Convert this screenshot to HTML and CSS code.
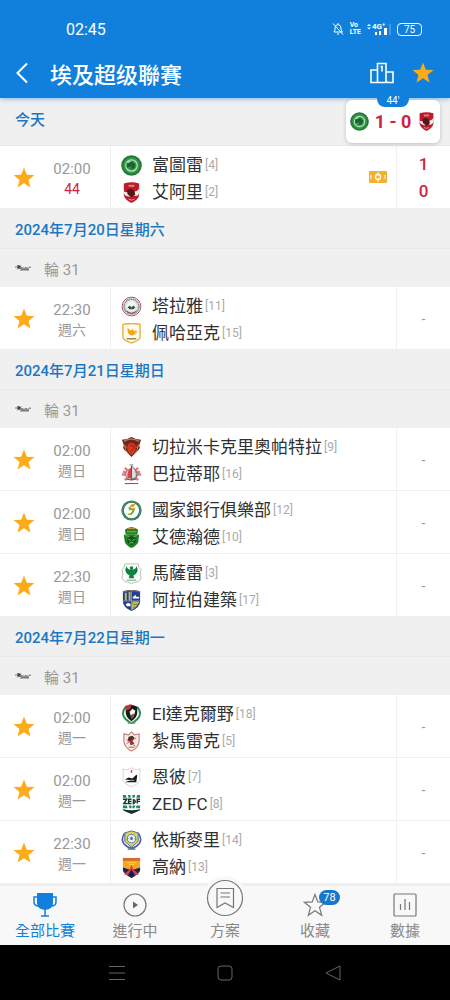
FILE: index.html
```html
<!DOCTYPE html>
<html lang="zh-Hant">
<head>
    <meta charset="UTF-8">
    <meta name="viewport" content="width=device-width, initial-scale=1.0">
    <title>埃及超级聯賽</title>
    <link rel="stylesheet" href="styles.css">
</head>
<body>

    <!-- Shared icons and club crests -->
    <svg class="sprite" aria-hidden="true">
        <symbol id="star" viewBox="0 0 22 22"><path d="M11 0.5l2.8 7.2 7.7.4-6 4.9 2 7.5-6.5-4.2-6.5 4.2 2-7.5-6-4.9 7.7-.4z" fill="#fbac18"/></symbol>
        <symbol id="league" viewBox="0 0 16 10">
            <circle cx="4" cy="4" r="1.700" fill="#222"/>
            <path d="M0 4h2M2 2l4 4M2 6.500l4-4M5 7h9" stroke="#555" stroke-width=".8" fill="none"/>
            <path d="M7 4v3M9 4.500v2.500M11 4v3M13 4.500v2.500M15 3.500v1.500" stroke="#555" stroke-width="1.200"/>
        </symbol>
        <symbol id="future" viewBox="0 0 22 22">
            <circle cx="11" cy="11" r="10.800" fill="#237b36"/>
            <circle cx="11" cy="11" r="8.600" fill="#37964a"/>
            <circle cx="11" cy="11" r="6" fill="none" stroke="#b8e0bd" stroke-width="1.300"/>
            <path d="M6 8l6-1 3 3-1 4-4 1 1-3-5 1z" fill="#15662a"/>
            <path d="M7 8l3-1.500" stroke="#e6f5e6"/>
        </symbol>
        <symbol id="ahly" viewBox="0 0 22 22">
            <path d="M3 1.500Q11-1 19 1.500V13q0 5-8 9-8-4-8-9z" fill="#bd1b2b"/>
            <path d="M8 3h6v2H8z" fill="#e5828a"/>
            <path d="M3 10q4 2 6-1l3-1 2 2q3 0 5-3v5q-2 4-6 2l-3 1q-5 1-7-3z" fill="#eee"/>
            <path d="M6 9q4-4 8 0l1 4-4 3-4-3z" fill="#53191a"/>
            <path d="M8 18q3 2 6 0" stroke="#e9a0a0" fill="none"/>
        </symbol>
        <symbol id="tala" viewBox="0 0 22 22">
            <circle cx="11" cy="11" r="9.800" fill="#fff" stroke="#a64b52" stroke-width="1"/>
            <circle cx="11" cy="11" r="7.800" fill="#dfe5e3" stroke="#7d928e" stroke-width="1.800" stroke-dasharray="1.500 .5"/>
            <circle cx="11" cy="10.500" r="5" fill="#f5f6f5"/>
            <path d="M7 12l2-2 2 2 2-2 2 2-2 2H9z" fill="#35504c"/>
            <path d="M6 16q5 4 10 0" stroke="#8b3139" fill="none"/>
        </symbol>
        <symbol id="pharco" viewBox="0 0 22 22">
            <path d="M2 1.500q9-2 18 0V15q0 3-9 6-9-3-9-6z" fill="#fff9e9" stroke="#e3ae3e" stroke-width="1.400"/>
            <path d="M7 5q4 5 5 1 2 4 4 2-1 5-5 5-5-1-4-8z" fill="#f5a51d"/>
            <path d="M15 8q3 0 0 4" stroke="#e6b95e" fill="none"/>
            <path d="M6 16.500h10" stroke="#9a855d" stroke-width="1.600"/>
        </symbol>
        <symbol id="cleopatra" viewBox="0 0 22 22">
            <path d="M1 3q5 0 10-3 5 3 10 3l-2 6q2 3-2 6l-6 6-6-6q-4-3-2-6z" fill="#6e2420"/>
            <path d="M3 4.500Q11 0 19 4.500" stroke="#c7793d" stroke-width="1.500" fill="none"/>
            <path d="M4 8q0 6 4 10M18 8q0 6-4 10M3 9l3 2M19 9l-3 2" stroke="#d27d35" fill="none"/>
            <path d="M7 8q4-4 8 0 2 6-4 11-6-5-4-11z" fill="#d9391d"/>
            <path d="M9 10l3-2 2 4-4 3" stroke="#882017" fill="none"/>
        </symbol>
        <symbol id="mahalla" viewBox="0 0 22 22">
            <path d="M4 4l14 13M18 4L4 17M1 11h20M2 8l4 1M20 8l-4 1" stroke="#dc7e83" stroke-width="2.500"/>
            <circle cx="11" cy="11" r="6" fill="#f3eaea" stroke="#bd5960"/>
            <path d="M11 2q6 4 5 12l-5 2z" fill="#ddd" stroke="#555" stroke-width=".8"/>
            <path d="M11 3Q5 9 7 15h4z" fill="#d44750"/>
            <path d="M11 2v14M6 16h10M4 20.500h14" stroke="#555"/>
            <path d="M9 1h4" stroke="#777"/>
        </symbol>
        <symbol id="nbe" viewBox="0 0 22 22">
            <circle cx="11" cy="11" r="9.300" fill="#fff" stroke="#2f7a58" stroke-width="2.600"/>
            <circle cx="11" cy="11" r="9.300" fill="none" stroke="#8fb7a2" stroke-width=".7" stroke-dasharray="1 1"/>
            <path d="M15 5q-6 0-6 5l5-1q-1 6-7 6" stroke="#d6a92c" stroke-width="1.700" fill="none"/>
            <path d="M8 8l5 3-3 5" stroke="#55a35c" stroke-width="1.300" fill="none"/>
            <circle cx="12" cy="6" r="1.500" fill="#c8952d"/>
        </symbol>
        <symbol id="ittihad" viewBox="0 0 22 22">
            <path d="M4 3l3-2 4-1 4 1 3 2-1 5H5z" fill="#2b7f25"/>
            <path d="M3 8h16l-1 8q-2 4-7 6-5-2-7-6z" fill="#188322"/>
            <path d="M5 9q6 3 12 0M6 5h10" stroke="#83b850" fill="none"/>
            <circle cx="11" cy="14" r="4.500" fill="#075d15"/>
            <path d="M8 13l2 1M14 13l-2 1M9 17q2-2 4 0" stroke="#a7d7a0" fill="none"/>
            <path d="M7 1.500h8" stroke="#ce9b3e"/>
        </symbol>
        <symbol id="masry" viewBox="0 0 22 22">
            <path d="M4 1h14q0 4 3 6-2 5 0 8-1 5-6 5l-4 1.500L7 20q-5 0-6-5 2-3 0-8 3-2 3-6z" fill="#fff" stroke="#91b69a" stroke-width=".8"/>
            <path d="M9 5q2-3 4 0l-1 2q4 0 4-4 4 7-3 10l1 3H8l1-3Q2 10 6 3q0 4 4 4z" fill="#108341"/>
            <path d="M6 6v4M16 6v4" stroke="#0b6e34"/>
            <path d="M6 18h10" stroke="#8bb194" stroke-width="1.300"/>
        </symbol>
        <symbol id="arab" viewBox="0 0 22 22">
            <path d="M2 2q9-3 18 0v10q0 6-9 10-9-4-9-10z" fill="#253e8f"/>
            <path d="M4 3h2v8H4zM8 2h2v9H8zM12 12h7q-1 5-8 9z" fill="#c8bd45"/>
            <path d="M13 15h5M12.500 18h3" stroke="#777c39"/>
            <path d="M12 8l3-3 1 2h3v2h-6zM5 15q3-3 5 0v2H6z" fill="#fff"/>
            <path d="M11 1v20M2 11.500h18" stroke="#a6afca" stroke-width=".7"/>
            <path d="M2 2q9-3 18 0" stroke="#776a65" stroke-width="1.500" fill="none"/>
        </symbol>
        <symbol id="dakhleya" viewBox="0 0 22 22">
            <path d="M5 3Q-1 10 5 16q3 3 6 4 3-1 6-4 6-6 0-13" stroke="#2d8b50" stroke-width="2" fill="none"/>
            <path d="M5 3q6-4 12 0v7q-1 5-6 8-5-3-6-8z" fill="#171b1a"/>
            <path d="M4 2l7-2-1 5-5 2z" fill="#c52f35"/>
            <path d="M9 8l3-3 3 2-1 4-4 1z" fill="#f7f3ef"/>
            <path d="M10 12l3-2 1 3-3 3z" fill="#765a50"/>
            <path d="M7 20h8" stroke="#6b9f79" stroke-width="1.500"/>
        </symbol>
        <symbol id="zamalek" viewBox="0 0 22 22">
            <path d="M3 3l5 1 3-3 3 3 5-1v8q-1 7-8 10-7-3-8-10z" fill="#f7ebe6" stroke="#c98275" stroke-width="1.200"/>
            <path d="M8 6l4-1 2 2-2 4 2 2-4 2-1-4-2-1z" fill="#542c2a"/>
            <path d="M6 13l10-6M6 9l9 7M8 17h6" stroke="#c95450" stroke-width="1"/>
        </symbol>
        <symbol id="enppi" viewBox="0 0 22 22">
            <path d="M2 2l4 1 5-2 5 2 4-1q-1 6 0 12-2 4-9 7-7-3-9-7 1-6 0-12z" fill="#fff" stroke="#c9c9c9" stroke-width=".8"/>
            <path d="M11 3v3" stroke="#d74a51" stroke-width="1.600"/>
            <path d="M4 13l4-2 4 1 4-4 1 1-1 7H4l6-2z" fill="#191919"/>
            <path d="M6 14h8" stroke="#eee" stroke-width=".7"/>
        </symbol>
        <symbol id="zed" viewBox="0 0 22 22">
            <path d="M2 1h3l1 3H2zM7 1h3v3H8zM12 1h3l-1 3h-2zM17 1h3v3h-4zM2 12h4l1 3H2zM8 12h3v3H9zM12 12h3l-1 3h-2zM16 12h4v3h-4z" fill="#16896a"/>
            <path d="M2 5.500h4L3 10h4M11 5.500H8V10h3M8 7.700h3M13 5.500V10q4-2.200 0-4.500M20 5.500h-3V10M17 7.700h3" stroke="#17372f" stroke-width="1.500" fill="none"/>
            <path d="M2 16q9 2 18 0v1q-2 1-9 4-7-3-9-4z" fill="#162e29"/>
        </symbol>
        <symbol id="ismaily" viewBox="0 0 22 22">
            <path d="M4 3Q-2 12 6 17q5 4 10 0 8-5 2-14" stroke="#4c62a4" stroke-width="1.800" fill="none"/>
            <path d="M4 3l7-2 7 2v9l-7 6-7-6z" fill="#ddd54f" stroke="#4f69a3"/>
            <circle cx="11" cy="9" r="4.500" fill="#edf2f7" stroke="#5775b0"/>
            <path d="M10 8l1-1 1 1v2h-2zM8 9l-2 1M14 9l2 1" fill="#4c6db1" stroke="#4c6db1" stroke-width=".7"/>
            <path d="M7 20h8" stroke="#666f8b" stroke-width="1.500"/>
        </symbol>
        <symbol id="gouna" viewBox="0 0 22 22">
            <path d="M2 1h18v13q-1 4-9 8-8-4-9-8z" fill="#f8a51d"/>
            <path d="M2 1h18v3H2z" fill="#db6932"/>
            <path d="M6 6h10M8 8h6" stroke="#ffd33b"/>
            <path d="M2 11l9 3 9-3v3q-1 4-9 8-8-4-9-8z" fill="#172760"/>
            <path d="M11 8l2 5 6 5-4 1-4-4-4 4-4-1 6-5z" fill="#d33f4f"/>
            <path d="M11 13l3 5-3 4-3-4z" fill="#171e42"/>
        </symbol>
    </svg>

    <header class="app-header">
        <div class="status-bar">
            <span class="clock">02:45</span>
            <span class="status-icons">
                <svg class="bell" viewBox="0 0 12 14" aria-hidden="true"><path d="M2 10h8.500L9 8V6q0-3-3-3.500Q3 3 3 6v2zM5 12h2M1 1.500l10 11M6 1v1"/></svg>
                <span class="volte"><span>Vo</span><span>LTE</span></span>
                <svg class="signal" viewBox="0 0 24 14" role="img" aria-label="4G+">
                    <path d="M0 4l2-2 2 2zM0 5.500l2 2 2-2zM8 13v-3h2v3zM12 13V9h2v4zM17 13V6h3v7z" fill="#fff"/>
                    <path d="M23 2v11" stroke="#6eb3ed"/>
                    <text x="5" y="7" fill="#fff">4G⁺</text>
                </svg>
                <span class="battery">75</span>
            </span>
        </div>
        <div class="title-bar">
            <button class="icon-button back" aria-label="返回">
                <svg width="12" height="22" viewBox="0 0 12 22"><path d="M11 1.500L1.500 11l9.500 9.500" fill="none" stroke="#fff" stroke-width="2"/></svg>
            </button>
            <h1>埃及超级聯賽</h1>
            <button class="icon-button" aria-label="排名">
                <svg width="24" height="22" viewBox="0 0 24 22"><path d="M5 8H1v12.500h22V10h-5M7.500 20V1.500h8.500V20M10.500 4.500h1.500v5M5 8h2.500M16 10h2M16 20h2" fill="none" stroke="#fff" stroke-width="1.600"/></svg>
            </button>
            <button class="icon-button" aria-label="收藏聯賽"><svg class="star"><use href="#star"/></svg></button>
        </div>

        <!-- Floating live score -->
        <div class="live-score">
            <span class="live-minute">44'</span>
            <svg class="mini-crest"><use href="#future"/></svg>
            <strong>1 - 0</strong>
            <svg class="mini-crest"><use href="#ahly"/></svg>
        </div>
    </header>

    <main class="matches">
        <h2 class="day today">今天</h2>
        <section>
            <article class="match">
                <button class="favourite" aria-label="收藏"><svg class="star"><use href="#star"/></svg></button>
                <div class="time"><span>02:00</span><span class="minute">44</span></div>
                <div class="teams">
                    <div class="team"><svg class="crest"><use href="#future"/></svg>富圖雷<small>[4]</small></div>
                    <div class="team"><svg class="crest"><use href="#ahly"/></svg>艾阿里<small>[2]</small></div>
                    <svg class="pitch" viewBox="0 0 18 14" role="img" aria-label="動畫直播"><rect y="1" width="18" height="12" rx="1" fill="#f4b02c"/><path d="M9 2v2M9 10v2M2 5v4M16 5v4" stroke="#fff" fill="none"/><circle cx="9" cy="7" r="2.500" stroke="#fff" stroke-width="1.300" fill="none"/></svg>
                </div>
                <div class="score live"><span>1</span><span>0</span></div>
            </article>
        </section>

        <h2 class="day">2024年7月20日星期六</h2>
        <p class="round"><svg class="league"><use href="#league"/></svg>輪 31</p>
        <section>
            <article class="match">
                <button class="favourite" aria-label="收藏"><svg class="star"><use href="#star"/></svg></button>
                <div class="time"><span>22:30</span><span>週六</span></div>
                <div class="teams">
                    <div class="team"><svg class="crest"><use href="#tala"/></svg>塔拉雅<small>[11]</small></div>
                    <div class="team"><svg class="crest"><use href="#pharco"/></svg>佩哈亞克<small>[15]</small></div>
                </div>
                <div class="score">-</div>
            </article>
        </section>

        <h2 class="day">2024年7月21日星期日</h2>
        <p class="round"><svg class="league"><use href="#league"/></svg>輪 31</p>
        <section>
            <article class="match">
                <button class="favourite" aria-label="收藏"><svg class="star"><use href="#star"/></svg></button>
                <div class="time"><span>02:00</span><span>週日</span></div>
                <div class="teams">
                    <div class="team"><svg class="crest"><use href="#cleopatra"/></svg>切拉米卡克里奧帕特拉<small>[9]</small></div>
                    <div class="team"><svg class="crest"><use href="#mahalla"/></svg>巴拉蒂耶<small>[16]</small></div>
                </div>
                <div class="score">-</div>
            </article>
            <article class="match">
                <button class="favourite" aria-label="收藏"><svg class="star"><use href="#star"/></svg></button>
                <div class="time"><span>02:00</span><span>週日</span></div>
                <div class="teams">
                    <div class="team"><svg class="crest"><use href="#nbe"/></svg>國家銀行俱樂部<small>[12]</small></div>
                    <div class="team"><svg class="crest"><use href="#ittihad"/></svg>艾德瀚德<small>[10]</small></div>
                </div>
                <div class="score">-</div>
            </article>
            <article class="match">
                <button class="favourite" aria-label="收藏"><svg class="star"><use href="#star"/></svg></button>
                <div class="time"><span>22:30</span><span>週日</span></div>
                <div class="teams">
                    <div class="team"><svg class="crest"><use href="#masry"/></svg>馬薩雷<small>[3]</small></div>
                    <div class="team"><svg class="crest"><use href="#arab"/></svg>阿拉伯建築<small>[17]</small></div>
                </div>
                <div class="score">-</div>
            </article>
        </section>

        <h2 class="day">2024年7月22日星期一</h2>
        <p class="round"><svg class="league"><use href="#league"/></svg>輪 31</p>
        <section>
            <article class="match">
                <button class="favourite" aria-label="收藏"><svg class="star"><use href="#star"/></svg></button>
                <div class="time"><span>02:00</span><span>週一</span></div>
                <div class="teams">
                    <div class="team"><svg class="crest"><use href="#dakhleya"/></svg>El達克爾野<small>[18]</small></div>
                    <div class="team"><svg class="crest"><use href="#zamalek"/></svg>紮馬雷克<small>[5]</small></div>
                </div>
                <div class="score">-</div>
            </article>
            <article class="match">
                <button class="favourite" aria-label="收藏"><svg class="star"><use href="#star"/></svg></button>
                <div class="time"><span>02:00</span><span>週一</span></div>
                <div class="teams">
                    <div class="team"><svg class="crest"><use href="#enppi"/></svg>恩彼<small>[7]</small></div>
                    <div class="team"><svg class="crest"><use href="#zed"/></svg>ZED FC<small>[8]</small></div>
                </div>
                <div class="score">-</div>
            </article>
            <article class="match">
                <button class="favourite" aria-label="收藏"><svg class="star"><use href="#star"/></svg></button>
                <div class="time"><span>22:30</span><span>週一</span></div>
                <div class="teams">
                    <div class="team"><svg class="crest"><use href="#ismaily"/></svg>依斯麥里<small>[14]</small></div>
                    <div class="team"><svg class="crest"><use href="#gouna"/></svg>高納<small>[13]</small></div>
                </div>
                <div class="score">-</div>
            </article>
        </section>
    </main>

    <nav class="tabs">
        <a href="#" class="tab active">
            <svg width="24" height="26" viewBox="0 0 24 26"><path d="M4 1h16v10q0 6-8 7-8-1-8-7z" fill="#1180dc"/><path d="M4 5H1v5q0 4 5 4M20 5h3v5q0 4-5 4M12 17v7M8 24h8" stroke="#1180dc" stroke-width="1.500" fill="none"/></svg>
            <span>全部比賽</span>
        </a>
        <a href="#" class="tab">
            <svg width="24" height="26" viewBox="0 0 24 26"><circle cx="12" cy="13" r="11" fill="none" stroke="#777" stroke-width="1.200"/><path d="M10 9.500l5 3.500-5 3.500z" fill="#666"/></svg>
            <span>進行中</span>
        </a>
        <a href="#" class="tab plan">
            <svg width="44" height="44" viewBox="0 0 44 44"><circle cx="22" cy="22" r="22" fill="#f8f8f8"/><circle cx="22" cy="22" r="17.500" fill="none" stroke="#777" stroke-width="1.200"/><path d="M14 12.500h16.500v19L22 27l-8 4.500zM17.500 17H27M17.500 21H27" fill="none" stroke="#777" stroke-width="1.200"/></svg>
            <span>方案</span>
        </a>
        <a href="#" class="tab">
            <svg width="24" height="26" viewBox="0 0 24 26"><path d="M12 2.500l2.800 7.400 8 .4-6.300 5 2.200 8-6.700-4.500-6.700 4.500 2.200-8-6.300-5 8-.4z" fill="none" stroke="#777" stroke-width="1.200"/></svg>
            <b class="badge">78</b>
            <span>收藏</span>
        </a>
        <a href="#" class="tab">
            <svg width="24" height="26" viewBox="0 0 24 26"><rect x="1" y="2" width="22" height="22" rx="1" fill="none" stroke="#777" stroke-width="1.200"/><path d="M7.500 12v6M12 7v11M16.500 10v8" stroke="#777" stroke-width="1.200"/></svg>
            <span>數據</span>
        </a>
    </nav>

    <div class="system-bar">
        <button aria-label="選單"><svg width="16" height="16" viewBox="0 0 16 16"><path d="M0 1.500h16M0 8h16M0 14.500h16"/></svg></button>
        <button aria-label="主畫面"><svg width="16" height="16" viewBox="0 0 16 16"><rect x="1" y="1" width="14" height="14" rx="3"/></svg></button>
        <button aria-label="返回上頁"><svg width="16" height="16" viewBox="0 0 16 16"><path d="M15 1v14L1 8z"/></svg></button>
    </div>

</body>
</html>
```

FILE: styles.css
```css
* {
    margin: 0;
    padding: 0;
    box-sizing: border-box;
}

body {
    display: flex;
    flex-direction: column;
    min-height: 100vh;
    background-color: #f0f0f0;
    color: #303030;
    font-family: Roboto, "Noto Sans CJK TC", sans-serif;
}

button {
    background: none;
    border: none;
    cursor: pointer;
}

svg {
    display: block;
    flex-shrink: 0;
}

.sprite {
    position: absolute;
    width: 0;
    height: 0;
}

.app-header {
    position: relative;
    z-index: 1;
    background-color: #1180dc;
    color: white;
    box-shadow: 0 1px 5px #79b9ef;
}

.status-bar {
    display: flex;
    justify-content: space-between;
    align-items: center;
    height: 48px;
    padding: 10px 28px 0 66px;
}

.clock {
    font-size: 16px;
}

.status-icons {
    display: flex;
    align-items: center;
    gap: 6px;
}

.bell {
    width: 12px;
    height: 14px;
    fill: none;
    stroke: white;
}

.volte {
    display: flex;
    flex-direction: column;
    font-size: 7px;
    font-weight: 700;
    line-height: 7px;
}

.signal {
    width: 24px;
    height: 14px;
    font-size: 8px;
    font-weight: 700;
}

.battery {
    width: 25px;
    border: 1px solid white;
    border-radius: 4px;
    font-size: 10px;
    line-height: 11px;
    text-align: center;
}

.title-bar {
    display: flex;
    align-items: center;
    height: 50px;
    padding: 0 16px 0 11px;
}

.title-bar h1 {
    flex: 1;
    padding-left: 22px;
    font-size: 22px;
    font-weight: 500;
}

.icon-button {
    padding: 4px 0;
    margin-left: 18px;
}

.icon-button.back {
    margin-left: 5px;
}

.star {
    width: 22px;
    height: 22px;
}

.live-score {
    position: absolute;
    top: 100px;
    right: 10px;
    display: flex;
    align-items: center;
    justify-content: space-between;
    width: 94px;
    height: 43px;
    padding: 0 4px;
    background-color: white;
    border-radius: 6px;
    box-shadow: 0 1px 4px rgba(0, 0, 0, 0.2);
    color: #c92643;
}

.live-score strong {
    font-size: 18px;
    font-weight: 700;
}

.live-minute {
    position: absolute;
    top: -6px;
    left: 31px;
    width: 32px;
    background-color: #1180dc;
    border-radius: 0 0 8px 8px;
    color: white;
    font-size: 10px;
    line-height: 13px;
    text-align: center;
}

.mini-crest {
    width: 19px;
    height: 19px;
}

.matches {
    flex: 1;
}

.day {
    height: 41px;
    padding-left: 15px;
    border-bottom: 1px solid #e9e9e9;
    color: #1b77c1;
    font-size: 15px;
    font-weight: 500;
    line-height: 44px;
}

.day.today {
    height: 48px;
}

.round {
    display: flex;
    align-items: center;
    gap: 13px;
    height: 38px;
    padding-left: 15px;
    color: #999;
    font-size: 15px;
}

.league {
    width: 16px;
    height: 10px;
}

.match {
    display: grid;
    grid-template-columns: 48px 62px 1fr 53px;
    height: 62px;
    background-color: white;
}

.match + .match {
    height: 63px;
    border-top: 1px solid #f0f0f0;
}

.favourite {
    display: flex;
    align-items: center;
    justify-content: center;
    padding-top: 2px;
}

.time {
    display: flex;
    flex-direction: column;
    justify-content: center;
    padding: 4px 14px 0 0;
    color: #999;
    font-size: 15px;
    line-height: 20px;
    text-align: center;
}

.time span + span {
    font-size: 14px;
}

.time .minute {
    color: #c92643;
}

.teams {
    position: relative;
    padding: 6px 0 2px 10px;
    border-left: 1px solid #f0f0f0;
    border-right: 1px solid #f0f0f0;
}

.team {
    display: flex;
    align-items: center;
    font-size: 17px;
    line-height: 27px;
    white-space: nowrap;
}

.team small {
    padding-left: 2px;
    color: #aaa;
    font-size: 12px;
}

.crest {
    width: 21px;
    height: 21px;
    margin-right: 10px;
}

.pitch {
    position: absolute;
    top: 24px;
    right: 9px;
    width: 18px;
    height: 14px;
}

.score {
    display: flex;
    flex-direction: column;
    align-items: center;
    justify-content: center;
    padding-top: 2px;
    color: #999;
    font-size: 14px;
}

.score.live {
    color: #c92643;
    font-size: 17px;
    font-weight: 500;
    line-height: 27px;
}

.tabs {
    position: relative;
    display: grid;
    grid-template-columns: repeat(5, 1fr);
    grid-template-rows: 100%;
    height: 62px;
    background-color: #f8f8f8;
    border-top: 3px solid #efefef;
}

.tab {
    position: relative;
    display: flex;
    flex-direction: column;
    align-items: center;
    justify-content: flex-end;
    gap: 2px;
    padding-bottom: 3px;
    color: #888;
    font-size: 15px;
    line-height: 22px;
    text-decoration: none;
}

.tab.active {
    color: #1180dc;
}

.tab.plan {
    gap: 0;
}

.badge {
    position: absolute;
    top: 4px;
    left: 50%;
    width: 21px;
    margin-left: 4px;
    background-color: #1877c9;
    border-radius: 8px;
    color: white;
    font-size: 11px;
    font-weight: 400;
    line-height: 15px;
    text-align: center;
}

.system-bar {
    display: grid;
    grid-template-columns: repeat(3, 1fr);
    justify-items: center;
    align-items: center;
    height: 55px;
    padding: 0 14%;
    background-color: black;
}

.system-bar svg {
    fill: none;
    stroke: #666;
    stroke-width: 1;
}
```
